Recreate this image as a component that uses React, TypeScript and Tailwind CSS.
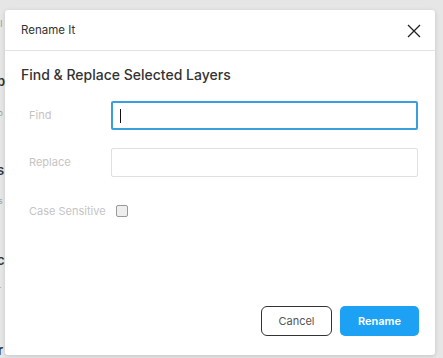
import React from "react";

export default function App() {
  return (
    <div
      className="relative w-[443px] h-[358px] bg-[#e6e6e6] overflow-hidden"
      style={{ fontFamily: "Inter, 'Noto Sans', sans-serif" }}
    >
      {/* background content peeking out on the left */}
      <div className="absolute left-0 top-0 w-[5px] h-full overflow-hidden text-[#333]">
        <div className="absolute left-[-2px] top-[17px] text-[9px] text-[#999]">ll</div>
        <div className="absolute left-[-3px] top-[72px] text-[13px] font-semibold">b</div>
        <div className="absolute left-[-2px] top-[107px] text-[8px] text-[#999]">o</div>
        <div className="absolute left-[-3px] top-[161px] text-[13px] font-semibold">s</div>
        <div className="absolute left-[-4px] top-[195px] text-[8px] text-[#999]">ts</div>
        <div className="absolute left-[-3px] top-[251px] text-[13px] font-semibold">c</div>
        <div className="absolute left-[-2px] top-[283px] text-[8px] text-[#999]">r</div>
        <div className="absolute left-[-2px] top-[341px] text-[13px] font-semibold">r</div>
      </div>

      {/* dialog */}
      <div className="absolute left-[5px] top-[10px] w-[430px] h-[345px] bg-white rounded-[3px] shadow-[0_1px_4px_rgba(0,0,0,0.15)] flex flex-col">
        <div className="h-[41px] flex items-center justify-between pl-[16px] pr-[14px] border-b border-[#e2e2e2]">
          <span className="text-[11.5px] text-[#333] mt-[2px]">Rename It</span>
          <svg width="14" height="14" viewBox="0 0 14 14" className="mt-[2px]">
            <path d="M1 1L13 13M13 1L1 13" stroke="#222" strokeWidth="1.3" fill="none" />
          </svg>
        </div>
        <div className="flex flex-col pl-[16px] pr-[17px]">
          <div className="mt-[14px] text-[14px] font-medium text-[#333] leading-[20px]">
            Find &amp; Replace Selected Layers
          </div>
          <div className="mt-[16px] flex items-center h-[29px]">
            <span className="w-[90px] pl-[8px] text-[11px] text-[#c4c4c4]">Find</span>
            <div className="flex-1 h-[29px] border-2 border-[#3a9fdf] rounded-[2px] flex items-center pl-[7px]">
              <div className="w-[1px] h-[14px] bg-[#111]" />
            </div>
          </div>
          <div className="mt-[18px] flex items-center h-[29px]">
            <span className="w-[90px] pl-[8px] text-[11px] text-[#c4c4c4]">Replace</span>
            <div className="flex-1 h-[29px] border border-[#e0e0e0] rounded-[2px]" />
          </div>
          <div className="mt-[27px] flex items-center h-[14px]">
            <span className="w-[95px] pl-[8px] text-[11px] text-[#c4c4c4]">Case Sensitive</span>
            <div className="w-[12px] h-[12px] border border-[#9a9a9a] rounded-[2px] bg-[#eeeeee]" />
          </div>
        </div>
        <div className="mt-auto mb-[19px] flex justify-end gap-[8px] pr-[16px]">
          <div className="w-[71px] h-[30px] rounded-[6px] border border-[#333] flex items-center justify-center text-[11px] text-[#555]">
            Cancel
          </div>
          <div className="w-[79px] h-[30px] rounded-[5px] bg-[#1da1f5] flex items-center justify-center text-[11px] font-semibold text-white">
            Rename
          </div>
        </div>
      </div>
    </div>
  );
}
